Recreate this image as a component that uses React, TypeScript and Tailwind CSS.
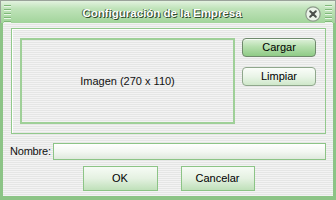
import React from 'react';

const stripes =
  'bg-[repeating-linear-gradient(180deg,#f3f3f3_0px,#f3f3f3_1px,#e5e6e5_1px,#e5e6e5_2px)]';

const Grip = () => (
  <div className="flex flex-col gap-[3px] pt-[4px]">
    {[0, 1, 2, 3, 4].map((i) => (
      <div key={i} className="w-[7px] h-px bg-[#7fb879] shadow-[0_1px_0_#e8f5e6]" />
    ))}
  </div>
);

const CloseButton = () => (
  <svg width="16" height="16" viewBox="0 0 16 16">
    <circle cx="8" cy="8" r="7.2" fill="#eaf3e8" stroke="#8c9a8a" strokeWidth="1.2" />
    <path d="M5.2 5.2 L10.8 10.8 M10.8 5.2 L5.2 10.8" stroke="#4a4f4a" strokeWidth="2" strokeLinecap="round" />
  </svg>
);

export default function App() {
  return (
    <div
      className="w-[336px] h-[200px] flex flex-col overflow-hidden text-black"
      style={{ fontFamily: '"Liberation Sans", Arial, sans-serif' }}
    >
      {/* title bar */}
      <div className="h-[23px] flex items-start justify-between px-[3px] border-x border-t border-[#9aa39a] bg-[linear-gradient(180deg,#e2f2df_0%,#bfe3b9_35%,#a2d49b_100%)]">
        <Grip />
        <span className="mt-[4px] ml-[8px] text-[11.5px] font-bold text-white [text-shadow:1px_1px_0_#2f4a2c,-1px_0_0_#4d6c49]">
          Configuración de la Empresa
        </span>
        <div className="flex items-start gap-[4px]">
          <div className="mt-[5px]">
            <CloseButton />
          </div>
          <Grip />
        </div>
      </div>

      {/* body */}
      <div className={`flex-1 flex flex-col border-x-[3px] border-b-[4px] border-[#8cc486] ${stripes}`}>
        {/* group box */}
        <div className="ml-[8px] mt-[5px] w-[315px] h-[106px] border border-[#92c98c] shadow-[inset_1px_1px_0_#ffffff] flex pt-[9px] pl-[8px]">
          <div className="w-[215px] h-[86px] border-2 border-[#9fd098] flex items-center justify-center">
            <span className="text-[11px] text-[#111]">Imagen (270 x 110)</span>
          </div>
          <div className="ml-[7px] flex flex-col gap-[10px]">
            <button className="w-[74px] h-[19px] rounded-[4px] border border-[#6f8a6c] bg-[linear-gradient(180deg,#dff1db_0%,#b6dfae_45%,#8fcb86_100%)] text-[11px] leading-none text-black shadow-[inset_0_1px_0_#f4fbf3]">
              Cargar
            </button>
            <button className="w-[74px] h-[19px] rounded-[4px] border border-[#8fa78c] bg-[linear-gradient(180deg,#fafdf9_0%,#e9f4e7_50%,#cfe8ca_100%)] text-[11px] leading-none text-black">
              Limpiar
            </button>
          </div>
        </div>

        {/* nombre */}
        <div className="mt-[9px] flex items-center h-[17px]">
          <span className="ml-[7px] mr-[2px] shrink-0 text-[11px] tracking-[-0.2px] text-[#111]">Nombre:</span>
          <div className="w-[273px] h-[17px] border border-[#8cc486] bg-[linear-gradient(180deg,#ffffff_0%,#f3f7f2_50%,#dfe9dd_100%)]" />
        </div>

        {/* actions */}
        <div className="mt-[6px] flex justify-center gap-[23px] pl-[1px]">
          <button className="w-[75px] h-[25px] border border-[#8cc486] bg-[linear-gradient(180deg,#f6fbf5_0%,#e4f1e1_50%,#bfe0b9_100%)] text-[11px] text-black">
            OK
          </button>
          <button className="w-[74px] h-[25px] border border-[#8cc486] bg-[linear-gradient(180deg,#f6fbf5_0%,#e4f1e1_50%,#bfe0b9_100%)] text-[11px] text-black">
            Cancelar
          </button>
        </div>
      </div>
    </div>
  );
}
